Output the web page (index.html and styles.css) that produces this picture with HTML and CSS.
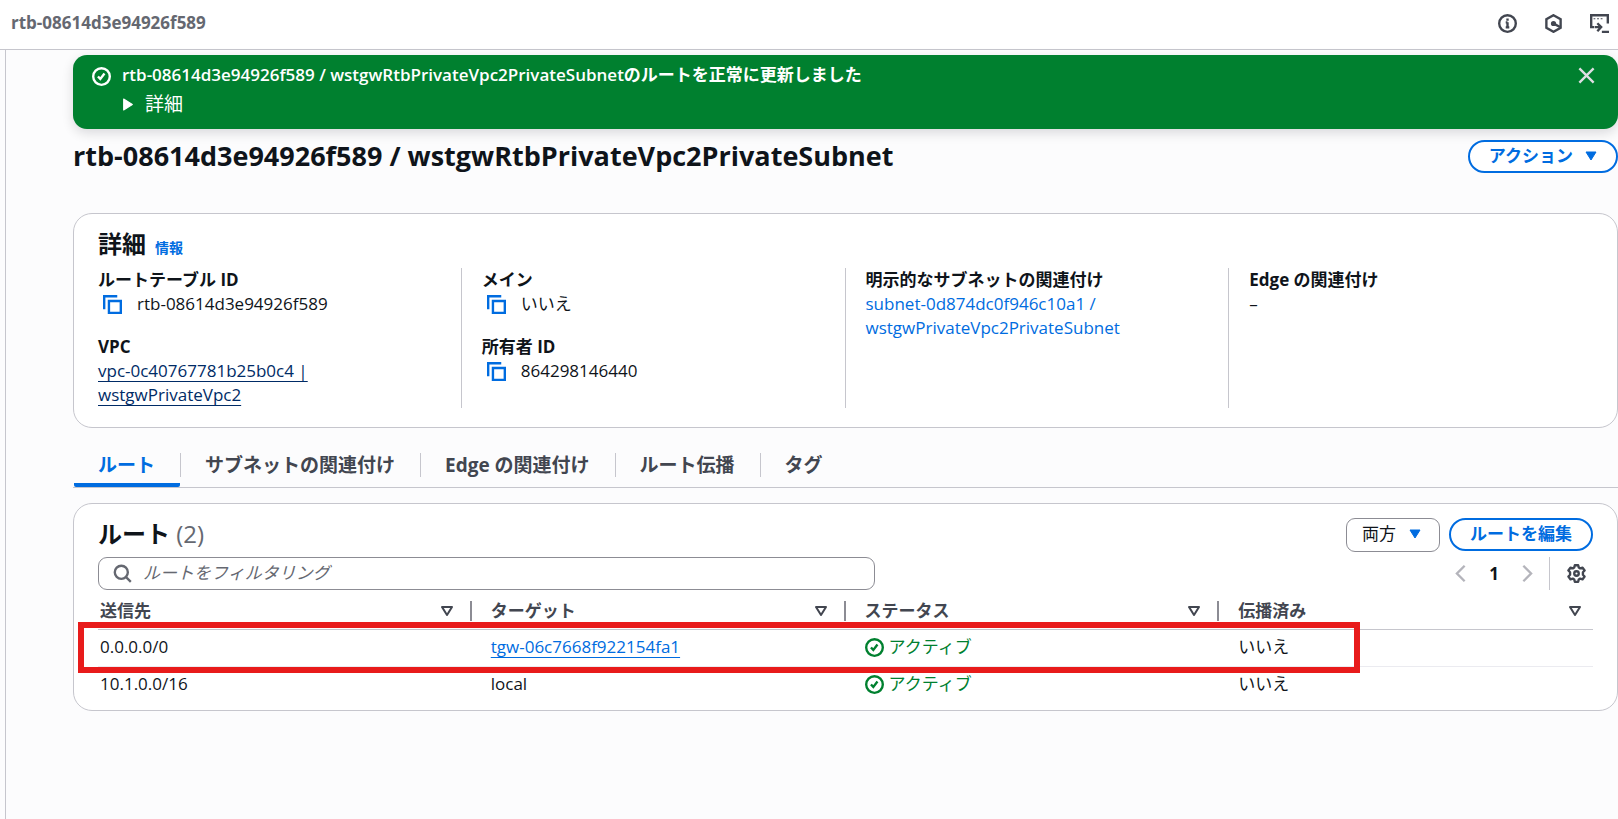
FILE: index.html
```html
<!DOCTYPE html>
<html lang="ja">
<head>
<meta charset="utf-8">
<meta name="viewport" content="width=device-width, initial-scale=1">
<title>rtb-08614d3e94926f589</title>
<link rel="stylesheet" href="styles.css">
</head>
<body>
<svg class="sprite" aria-hidden="true">
  <symbol id="i-check" viewBox="0 0 16 16"><circle cx="8" cy="8" r="7"/><path d="m5 8 2 2 3.5-4.5"/></symbol>
  <symbol id="i-copy" viewBox="0 0 16 16"><path d="M5 5h10v10H5z"/><path d="M1 12V1h11"/></symbol>
  <symbol id="i-down" viewBox="0 0 12 10"><path d="M1 1h10L6 9z"/></symbol>
</svg>
<header class="topbar">
  <span class="crumb">rtb-08614d3e94926f589</span>
  <div class="topbar-tools">
    <button class="icon-btn" aria-label="情報パネル"><svg class="icon" viewBox="0 0 16 16"><circle cx="8" cy="8" r="7"/><path d="M8 11.8V7M6.5 7H8M6.5 11.3h3M8 3.8v1.8"/></svg></button>
    <button class="icon-btn" aria-label="ツール"><svg class="icon" viewBox="0 0 16 16"><path d="M8 1l6 3.300v7.400L8 15l-6-3.300V4.300z"/><circle class="solid" cx="8" cy="8" r="1.200"/><path d="m8.500 8.300 5 2.700"/></svg></button>
    <button class="icon-btn" aria-label="CloudShell"><svg class="icon" viewBox="0 0 16 16"><path d="M3.500 11H1V1h14v7M10 15h6M4 11h5M6.200 7.800 9.400 11l-3.200 3.500"/><path class="dots" d="M3 4h1.500M6 4h1.500M9 4h1.500"/></svg></button>
  </div>
</header>
<div class="shell">
  <div class="side"></div>
  <main class="main">
    <section class="flash">
      <svg class="icon" aria-hidden="true"><use href="#i-check"/></svg>
      <div class="flash-body">
        <strong class="flash-title">rtb-08614d3e94926f589 / wstgwRtbPrivateVpc2PrivateSubnetのルートを正常に更新しました</strong>
        <details>
          <summary><svg class="caret" viewBox="0 0 10 12"><path d="M1 1v10l8-5z"/></svg>詳細</summary>
        </details>
      </div>
      <button class="icon-btn flash-close" aria-label="閉じる"><svg class="icon" viewBox="0 0 16 16"><path d="m2 2 12 12M14 2 2 14"/></svg></button>
    </section>

    <div class="page-head">
      <h1>rtb-08614d3e94926f589 / wstgwRtbPrivateVpc2PrivateSubnet</h1>
      <button class="btn">アクション<svg class="down" aria-hidden="true"><use href="#i-down"/></svg></button>
    </div>

    <section class="card details-card">
      <div class="card-title"><h2>詳細</h2><a class="info" href="#">情報</a></div>
      <div class="columns">
        <div class="column">
          <dl><dt>ルートテーブル ID</dt><dd class="copy"><button class="icon-btn" aria-label="コピー"><svg class="icon" aria-hidden="true"><use href="#i-copy"/></svg></button>rtb-08614d3e94926f589</dd></dl>
          <dl><dt>VPC</dt><dd><a class="visited" href="#">vpc-0c40767781b25b0c4 |<br>wstgwPrivateVpc2</a></dd></dl>
        </div>
        <div class="column">
          <dl><dt>メイン</dt><dd class="copy"><button class="icon-btn" aria-label="コピー"><svg class="icon" aria-hidden="true"><use href="#i-copy"/></svg></button>いいえ</dd></dl>
          <dl><dt>所有者 ID</dt><dd class="copy"><button class="icon-btn" aria-label="コピー"><svg class="icon" aria-hidden="true"><use href="#i-copy"/></svg></button>864298146440</dd></dl>
        </div>
        <div class="column">
          <dl><dt>明示的なサブネットの関連付け</dt><dd><a href="#">subnet-0d874dc0f946c10a1 /<br>wstgwPrivateVpc2PrivateSubnet</a></dd></dl>
        </div>
        <div class="column">
          <dl><dt>Edge の関連付け</dt><dd>–</dd></dl>
        </div>
      </div>
    </section>

    <nav class="tabs" role="tablist">
      <button class="tab active" role="tab" aria-selected="true"><span>ルート</span></button>
      <button class="tab" role="tab"><span>サブネットの関連付け</span></button>
      <button class="tab" role="tab"><span>Edge の関連付け</span></button>
      <button class="tab" role="tab"><span>ルート伝播</span></button>
      <button class="tab" role="tab"><span>タグ</span></button>
    </nav>

    <section class="card">
      <div class="table-head">
        <h2>ルート <span class="count">(2)</span></h2>
        <div class="actions">
          <div class="select">
            <select aria-label="ルートの種類"><option>両方</option></select>
            <svg class="down" aria-hidden="true"><use href="#i-down"/></svg>
          </div>
          <button class="btn">ルートを編集</button>
        </div>
      </div>
      <div class="filter-row">
        <label class="search">
          <svg class="icon" viewBox="0 0 16 16" aria-hidden="true"><circle cx="7" cy="7" r="5.500"/><path d="m11 11 4 4"/></svg>
          <input type="text" aria-label="ルートをフィルタリング" placeholder="ルートをフィルタリング">
        </label>
        <div class="pager">
          <div class="pages">
            <button class="icon-btn muted" aria-label="前のページ"><svg class="icon" viewBox="0 0 16 16"><path d="M11.500 1.500 5 8l6.500 6.500"/></svg></button>
            <button class="page-no">1</button>
            <button class="icon-btn muted" aria-label="次のページ"><svg class="icon" viewBox="0 0 16 16"><path d="M4.500 1.500 11 8l-6.500 6.500"/></svg></button>
          </div>
          <button class="icon-btn settings" aria-label="設定"><svg class="icon round" viewBox="0 0 16 16"><path d="M6.600 1h2.800l.5 2 1.200.7 2-.6L14.800 5.500 13.400 7v2l1.400 1.500-1.700 2.400-2-.6-1.200.7-.5 2H6.600l-.5-2-1.200-.7-2 .6-1.700-2.400L2.600 9V7L1.200 5.500l1.700-2.400 2 .6L6.100 3z"/><circle cx="8" cy="8" r="1.900"/></svg></button>
        </div>
      </div>
      <div class="table-wrap">
        <table>
          <thead>
            <tr>
              <th scope="col"><div class="th">送信先<svg class="down sort" aria-hidden="true"><use href="#i-down"/></svg></div></th>
              <th scope="col"><div class="th">ターゲット<svg class="down sort" aria-hidden="true"><use href="#i-down"/></svg></div></th>
              <th scope="col"><div class="th">ステータス<svg class="down sort" aria-hidden="true"><use href="#i-down"/></svg></div></th>
              <th scope="col"><div class="th">伝播済み<svg class="down sort" aria-hidden="true"><use href="#i-down"/></svg></div></th>
            </tr>
          </thead>
          <tbody>
            <tr>
              <td>0.0.0.0/0</td>
              <td><a class="underlined" href="#">tgw-06c7668f922154fa1</a></td>
              <td><span class="status"><svg class="icon" aria-hidden="true"><use href="#i-check"/></svg>アクティブ</span></td>
              <td>いいえ</td>
            </tr>
            <tr>
              <td>10.1.0.0/16</td>
              <td>local</td>
              <td><span class="status"><svg class="icon" aria-hidden="true"><use href="#i-check"/></svg>アクティブ</span></td>
              <td>いいえ</td>
            </tr>
          </tbody>
        </table>
        <div class="highlight"></div>
      </div>
    </section>
  </main>
</div>
</body>
</html>
```
FILE: styles.css
```css
* { box-sizing: border-box; }

body {
  margin: 0;
  min-height: 100vh;
  display: flex;
  flex-direction: column;
  background: #fcfcfd;
  color: #0f141a;
  font-family: "Open Sans", "Noto Sans CJK JP", sans-serif;
  font-size: 17px;
  line-height: 24px;
}

button, input, select { font: inherit; color: inherit; }
button { background: none; border: 0; padding: 0; cursor: pointer; }
h1, h2, dl, dt, dd { margin: 0; }
a { color: #006ce0; text-decoration: none; }

.sprite { position: absolute; width: 0; height: 0; }

.icon {
  display: block;
  flex: none;
  width: 19px;
  height: 19px;
  fill: none;
  stroke: currentColor;
  stroke-width: 2;
}
.icon.round { stroke-linejoin: round; }
.icon .solid { fill: currentColor; }
.icon .dots { stroke-width: 1; }

.down {
  flex: none;
  width: 12px;
  height: 10px;
  fill: currentColor;
  stroke: currentColor;
  stroke-width: 1;
  stroke-linejoin: round;
}
.down.sort { fill: none; stroke-width: 2; }

.icon-btn { display: flex; }

/* Top bar */
.topbar {
  display: flex;
  align-items: center;
  justify-content: space-between;
  height: 50px;
  padding: 0 9px 3px 11px;
  background: #fff;
  border-bottom: 1px solid #c6c6cd;
}
.crumb { color: #656871; font-weight: 700; }
.topbar-tools { display: flex; gap: 27px; color: #424650; }

.shell { display: flex; flex: 1; }
.side { flex: none; width: 6px; border-right: 1px solid #c6c6cd; }
.main { flex: 1; min-width: 0; padding: 5px 0 0 67px; }

/* Success banner */
.flash {
  display: flex;
  gap: 11px;
  min-height: 74px;
  padding: 8px 22px 8px 19px;
  border-radius: 14px;
  background: #00802f;
  color: #fff;
  box-shadow: 0 4px 12px rgba(0, 7, 22, 0.14);
}
.flash > .icon { margin-top: 4px; }
.flash-body { flex: 1; }
.flash-title { display: block; font-weight: 600; }
.flash summary {
  display: flex;
  align-items: center;
  gap: 11px;
  margin-top: 4px;
  font-size: 19px;
  line-height: 26px;
  list-style: none;
}
.caret { width: 12px; height: 13px; fill: currentColor; stroke: currentColor; stroke-linejoin: round; }
.flash-close { height: 19px; margin-top: 3px; color: #dedee3; }

.page-head {
  display: flex;
  align-items: center;
  justify-content: space-between;
  margin: 10px 0 39px;
}
h1 { padding-bottom: 2px; font-size: 27px; font-weight: 700; line-height: 33px; }

.btn {
  display: inline-flex;
  align-items: center;
  gap: 12px;
  height: 33px;
  padding: 0 19px 2px;
  border: 2px solid #006ce0;
  border-radius: 20px;
  background: #fff;
  color: #006ce0;
  font-weight: 700;
  white-space: nowrap;
}

/* Containers */
.card {
  padding: 14px 24px 7px;
  border: 1px solid #c6c6cd;
  border-radius: 19px;
  background: #fff;
}
h2 { font-size: 24px; font-weight: 700; line-height: 30px; }
.details-card { padding-top: 15px; padding-bottom: 19px; }
.card-title { display: flex; align-items: baseline; gap: 9px; }
.info { font-size: 14px; font-weight: 700; }

.columns {
  display: grid;
  grid-template-columns: repeat(4, minmax(0, 1fr));
  column-gap: 40px;
  margin-top: 8px;
}
.column { display: flex; flex-direction: column; gap: 19px; padding-bottom: 1px; }
.column + .column { margin-left: -21px; padding-left: 20px; border-left: 1px solid #c6c6cd; }
dt { font-weight: 700; }
.copy { display: flex; align-items: center; gap: 15px; padding-left: 5px; }
.copy .icon-btn { color: #006ce0; }
.visited { color: #002b66; }
.visited, .underlined {
  text-decoration: underline;
  text-decoration-thickness: 1px;
  text-underline-offset: 4px;
  text-decoration-skip-ink: none;
}

/* Tabs */
.tabs {
  display: flex;
  margin: 19px 0 15px;
  padding-left: 1px;
  border-bottom: 1px solid #c6c6cd;
}
.tab {
  padding: 6px 0 6px;
  border-bottom: 4px solid transparent;
  color: #424650;
  font-size: 19px;
  font-weight: 700;
}
.tab span { display: block; padding: 0 25px 0 24px; }
.tab + .tab span { border-left: 1px solid #c6c6cd; }
.tab.active { border-bottom-color: #006ce0; border-radius: 2px; color: #006ce0; }

/* Routes table */
.table-head, .filter-row {
  display: flex;
  align-items: center;
  justify-content: space-between;
}
.table-head h2 { padding-bottom: 2px; }
.count { color: #656871; font-weight: 400; }
.actions { display: flex; gap: 9px; }
.select { position: relative; color: #006ce0; }
.select select {
  height: 34px;
  padding: 0 43px 2px 15px;
  border: 1px solid #8c8c94;
  border-radius: 9px;
  background: #fff;
  color: #0f141a;
  appearance: none;
}
.select .down { position: absolute; right: 19px; top: 11px; pointer-events: none; }

.filter-row { margin-top: 5px; }
.search {
  display: flex;
  align-items: center;
  gap: 11px;
  width: 52%;
  height: 33px;
  padding: 0 14px;
  border: 1px solid #8c8c94;
  border-radius: 9px;
  color: #656871;
}
.search input {
  flex: 1;
  min-width: 0;
  padding: 0 0 2px;
  border: 0;
  outline: 0;
  background: none;
}
.search input::placeholder { color: #656871; font-style: italic; opacity: 1; }

.pager { display: flex; align-items: center; gap: 12px; padding-right: 7px; color: #424650; }
.pages { display: flex; align-items: center; gap: 19px; }
.muted { color: #b4b4bb; }
.page-no { width: 10px; color: #0f141a; font-weight: 700; }
.settings { align-items: center; height: 33px; padding-left: 17px; border-left: 1px solid #c6c6cd; }

.table-wrap { position: relative; margin-top: 3px; }
table { width: 100%; border-collapse: separate; border-spacing: 0; table-layout: fixed; }
th, td { height: 37px; padding: 0 0 0 19px; text-align: left; }
td { padding-bottom: 2px; }
th:first-child, td:first-child { padding-left: 2px; }
th { border-bottom: 1px solid #c6c6cd; color: #424650; font-weight: 700; }
.th {
  display: flex;
  align-items: center;
  justify-content: space-between;
  height: 20px;
  padding-right: 17px;
  border-right: 2px solid #8c8c94;
}
th:last-child .th { padding-right: 12px; border-right: 0; }
tbody tr:first-child td { border-bottom: 1px solid #ebebf0; }
tbody tr:last-child td { height: 36px; }
.status { display: flex; align-items: center; gap: 5px; color: #00802f; }
.highlight {
  position: absolute;
  top: 29px;
  right: 233px;
  left: -20px;
  height: 51px;
  border: 6px solid #e81b1b;
  pointer-events: none;
}
```
